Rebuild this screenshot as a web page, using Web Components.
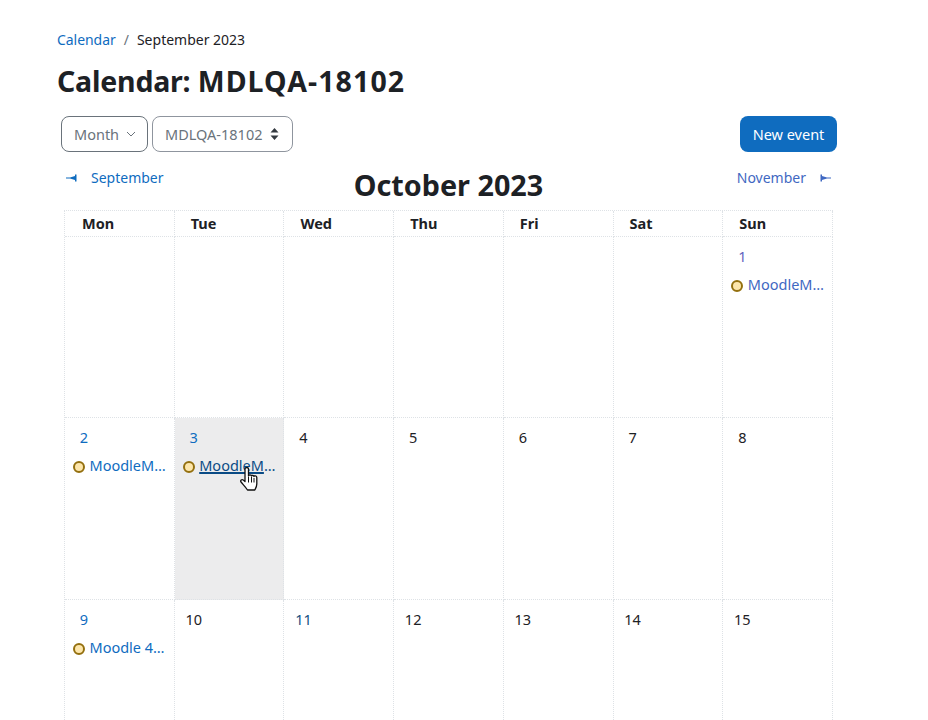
<!DOCTYPE html>
<html>
<head>
<meta charset="utf-8">
<title>Calendar</title>
<style>
html, body { margin: 0; padding: 0; background: #fff; overflow: hidden; }
body { font: 15px/22px "Noto Sans", "Open Sans", sans-serif; color: #1d2125; }
</style>
</head>
<body>
<cal-page>
	<cal-crumbs slot="crumbs" link="Calendar" current="September 2023"></cal-crumbs>
	<h-title slot="title">Calendar: <span>MDLQA-18102</span></h-title>
	<cal-toolbar slot="toolbar"></cal-toolbar>
	<cal-nav slot="nav" prev="September" month="October 2023" next="November"></cal-nav>
	<cal-grid slot="grid">
		<cal-day></cal-day><cal-day></cal-day><cal-day></cal-day><cal-day></cal-day><cal-day></cal-day><cal-day></cal-day>
		<cal-day num="1" link tint event="MoodleM…"></cal-day>

		<cal-day num="2" link event="MoodleM…"></cal-day>
		<cal-day num="3" link today hover event="MoodleM…"></cal-day>
		<cal-day num="4"></cal-day><cal-day num="5"></cal-day><cal-day num="6"></cal-day><cal-day num="7"></cal-day><cal-day num="8"></cal-day>

		<cal-day num="9" link event="Moodle 4…"></cal-day>
		<cal-day num="10"></cal-day><cal-day num="11" dim></cal-day><cal-day num="12"></cal-day>
		<cal-day num="13"></cal-day><cal-day num="14"></cal-day><cal-day num="15"></cal-day>
	</cal-grid>
</cal-page>

<script>
(function() {
	const LINK = "#0f6cbf";
	const TINT = "#3f68c2";
	const LINE = "#dee2e6";

	class CalPage extends HTMLElement {
		constructor() {
			super();
			this.attachShadow({mode: "open"}).innerHTML = `
				<style>
				:host { display: block; height: 720px; overflow: hidden; padding: 29px 91px 0 57px; box-sizing: border-box; }
				</style>
				<slot name="crumbs"></slot>
				<slot name="title"></slot>
				<slot name="toolbar"></slot>
				<slot name="nav"></slot>
				<slot name="grid"></slot>
			`;
		}
	}

	class CalCrumbs extends HTMLElement {
		connectedCallback() {
			this.attachShadow({mode: "open"}).innerHTML = `
				<style>
				:host { display: flex; font-size: 14px; line-height: 22px; }
				a { color: ${LINK}; text-decoration: none; letter-spacing: -.05px; }
				i { font-style: normal; color: #6a737b; padding: 0 8px; }
				</style>
				<a href="#">${this.getAttribute("link")}</a><i>/</i><span>${this.getAttribute("current")}</span>
			`;
		}
	}

	class HTitle extends HTMLElement {
		constructor() {
			super();
			this.attachShadow({mode: "open"}).innerHTML = `
				<style>
				:host { display: block; font-size: 28.5px; font-weight: 700; line-height: 36px; margin-top: 12px; letter-spacing: -.2px; }
				::slotted(span) { letter-spacing: 1.1px; }
				</style>
				<slot></slot>
			`;
		}
	}

	class CalToolbar extends HTMLElement {
		constructor() {
			super();
			this.attachShadow({mode: "open"}).innerHTML = `
				<style>
				:host { display: flex; align-items: center; gap: 4px; margin-top: 17px; padding-left: 4px; }
				.sel { display: flex; align-items: center; height: 36px; box-sizing: border-box; border: 1px solid #8f959e; border-radius: 8px; color: #6a737b; }
				.month { width: 87px; padding-left: 12px; gap: 7px; border-color: #6a737b; font-size: 14.5px; }
				.course { width: 141px; padding-left: 12px; gap: 8px; font-size: 14.5px; }
				.new { margin-left: auto; height: 36px; width: 97px; box-sizing: border-box; display: flex; align-items: center; justify-content: center; background: ${LINK}; color: #fff; border-radius: 8px; font-size: 14.5px; }
				svg { display: block; flex: none; }
				</style>
				<div class="sel month">Month
					<svg width="10" height="6" viewBox="0 0 10 6"><path d="M1 1l4 4 4-4" fill="none" stroke="#6a737b" stroke-width="1"/></svg>
				</div>
				<div class="sel course">MDLQA-18102
					<svg width="9" height="12" viewBox="0 0 9 12"><path d="M4.5 0L8.5 4.5H.5zM4.5 12L.5 7.5H8.5z" fill="#343a40"/></svg>
				</div>
				<div class="new">New event</div>
			`;
		}
	}

	class CalNav extends HTMLElement {
		connectedCallback() {
			this.attachShadow({mode: "open"}).innerHTML = `
				<style>
				:host { display: grid; grid-template-columns: 1fr auto 1fr; margin-top: 15px; height: 43px; padding: 0 6px 0 9px; }
				a { color: ${LINK}; text-decoration: none; font-size: 14px; display: flex; align-items: center; gap: 14px; height: 22px; }
				.next { justify-content: flex-end; color: ${TINT}; }
				h2 { margin: -1px 0 0; font-size: 28.75px; line-height: 38px; font-weight: 700; }
				svg { display: block; flex: none; }
				</style>
				<a href="#"><svg width="11" height="8" viewBox="0 0 11 8"><path d="M0 3.500H4L9 2V.5h1.500v7H9V6L4 4.500H0z" fill="${LINK}"/></svg>${this.getAttribute("prev")}</a>
				<h2>${this.getAttribute("month")}</h2>
				<a class="next" href="#">${this.getAttribute("next")}<svg width="11" height="8" viewBox="0 0 11 8"><path d="M11 3.500H7L2 2V.5H.5v7H2V6l5-1.500h4z" fill="${TINT}"/></svg></a>
			`;
		}
	}

	class CalGrid extends HTMLElement {
		constructor() {
			super();
			const days = ["Mon", "Tue", "Wed", "Thu", "Fri", "Sat", "Sun"];
			this.attachShadow({mode: "open"}).innerHTML = `
				<style>
				:host { display: grid; grid-template-columns: repeat(7, 1fr); grid-template-rows: 26px 181px 182px 182px; margin: 0 4px 0 7px; width: 769px; box-sizing: border-box; border-top: 1px dotted ${LINE}; border-left: 1px dotted ${LINE}; }
				.head { line-height: 25px; padding-left: 16px; font-size: 14.5px; font-weight: 700; border-right: 1px dotted ${LINE}; border-bottom: 1px dotted ${LINE}; }
				.head:first-of-type { padding-left: 17px; }
				</style>
				${days.map(d => `<div class="head">${d}</div>`).join("")}
				<slot></slot>
			`;
		}
	}

	class CalDay extends HTMLElement {
		connectedCallback() {
			const num = this.getAttribute("num") || "";
			const ev = this.getAttribute("event");
			let label = ev;
			if (ev && this.hasAttribute("hover")) {
				// the ellipsis is not underlined
				label = `<u>${ev.slice(0, -1)}</u>…`;
			}
			this.attachShadow({mode: "open"}).innerHTML = `
				<style>
				:host { display: block; position: relative; box-sizing: border-box; border-right: 1px dotted ${LINE}; border-bottom: 1px dotted ${LINE}; font-size: 14.5px; }
				:host([today]) { background: #ececed; }
				.num { width: 30px; margin: 8px 0 0 4px; height: 22px; line-height: 22px; text-align: center; }
				:host([link]) .num { color: ${LINK}; }
				:host([tint]) .num { color: #5f62bd; }
				:host([dim]) .num { color: #14507f; }
				.ev { display: flex; align-items: center; gap: 4.5px; margin: 6px 0 0 8px; height: 22px; line-height: 22px; white-space: nowrap; }
				.dot { flex: none; width: 12px; height: 12px; box-sizing: border-box; border-radius: 50%; background: #fde6ab; border: 2px solid #94700f; margin-top: 3px; }
				a { color: ${LINK}; text-decoration: none; }
				:host([tint]) a { color: ${TINT}; }
				:host([hover]) a { color: #0a4b85; }
				u { text-decoration-thickness: 1.5px; }
				.hand { position: absolute; left: 65px; top: 49px; }
				</style>
				${num ? `<div class="num">${num}</div>` : ""}
				${ev ? `<div class="ev"><span class="dot"></span><a href="#">${label}</a></div>` : ""}
				${this.hasAttribute("hover") ? `<svg class="hand" width="19" height="25" viewBox="0 0 19 25"><path d="M5 2c0-2 3.500-2 3.500 0v7c0-1.500 3-1.500 3 0 0-1 2.500-1 2.500.5 0-1 2.800-.8 2.800 1V17c0 2.500-1 4-2 6H7.500C5.500 20 3 17.500 1 15c-1-1.500.8-3 2.200-2L5 14.500z" fill="#fff" stroke="#111" stroke-width="1.300" stroke-linejoin="round"/><path d="M8.500 10v5.500M11.500 10v5.500M14 11v4.500" stroke="#111" stroke-width="1"/></svg>` : ""}
			`;
		}
	}

	customElements.define("cal-page", CalPage);
	customElements.define("cal-crumbs", CalCrumbs);
	customElements.define("h-title", HTitle);
	customElements.define("cal-toolbar", CalToolbar);
	customElements.define("cal-nav", CalNav);
	customElements.define("cal-grid", CalGrid);
	customElements.define("cal-day", CalDay);
})();
</script>
</body>
</html>
